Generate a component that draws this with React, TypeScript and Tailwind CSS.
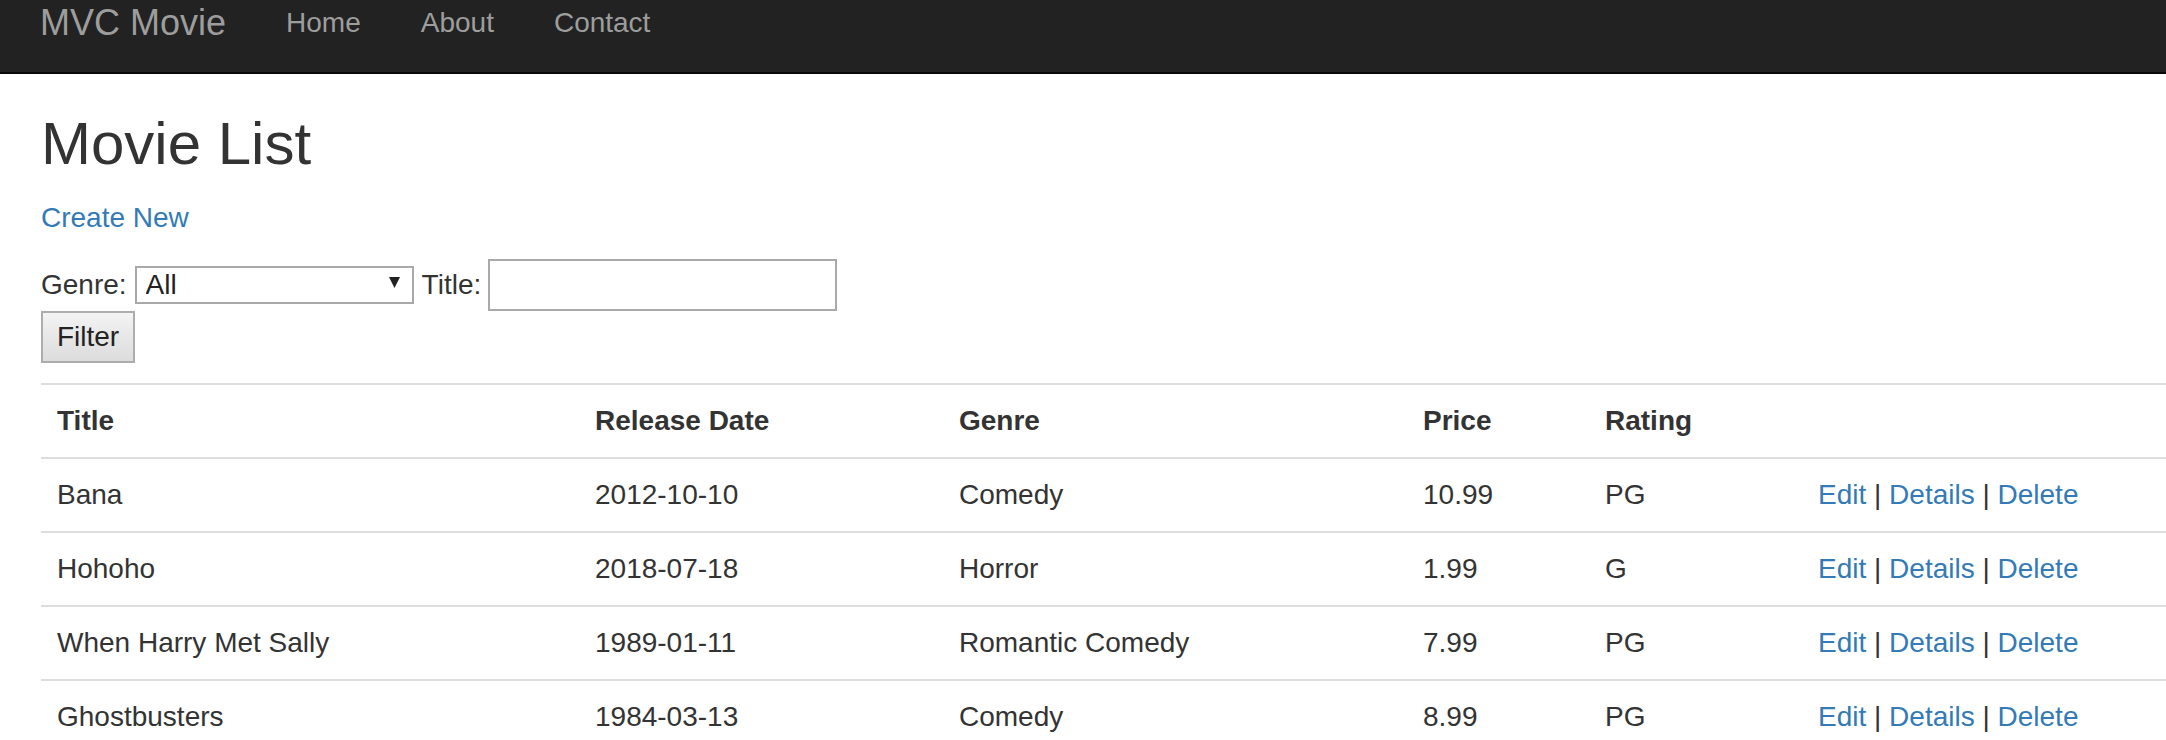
import React from 'react';

const MOVIES = [
    { title: 'Bana', date: '2012-10-10', genre: 'Comedy', price: '10.99', rating: 'PG' },
    { title: 'Hohoho', date: '2018-07-18', genre: 'Horror', price: '1.99', rating: 'G' },
    { title: 'When Harry Met Sally', date: '1989-01-11', genre: 'Romantic Comedy', price: '7.99', rating: 'PG' },
    { title: 'Ghostbusters', date: '1984-03-13', genre: 'Comedy', price: '8.99', rating: 'PG' },
];

const NAV_LINKS = ['Home', 'About', 'Contact'];

const ROW = 'grid grid-cols-[538px_364px_464px_182px_213px_1fr] border-t-2 border-[#ddd]';
const CELL = 'px-4 py-4 leading-[40px] whitespace-nowrap';

const Navbar: React.FC = () => (
    <nav className="h-[74px] bg-[#222] border-b-2 border-[#080808] flex items-start pl-[40px] pt-[3px]">
        <a href="#" className="text-[36px] leading-[40px] text-[#9d9d9d] pr-[30px]">MVC Movie</a>
        <ul className="flex">
            {NAV_LINKS.map((link) => (
                <li key={link}>
                    <a href="#" className="block px-[30px] text-[28px] leading-[40px] text-[#9d9d9d]">{link}</a>
                </li>
            ))}
        </ul>
    </nav>
);

const FilterForm: React.FC = () => (
    <form className="mt-[21px]">
        <div className="flex items-center h-[52px]">
            <span>Genre:</span>
            <div className="relative ml-[8px]">
                <select className="appearance-none w-[279px] h-[38px] border-2 border-[#a9a9a9] bg-white pl-[9px] text-[#222] leading-[34px]">
                    <option>All</option>
                </select>
                <svg className="absolute right-[14px] top-[13px] pointer-events-none" width="11" height="11" viewBox="0 0 11 11">
                    <polygon points="0,0 11,0 5.5,11" fill="#222" />
                </svg>
            </div>
            <span className="ml-[8px]">Title:</span>
            <input type="text" className="ml-[7px] w-[349px] h-[52px] border-2 border-[#a9a9a9] bg-white px-2" />
        </div>
        <button type="button" className="block w-[94px] h-[52px] border-2 border-[#adadad] bg-linear-to-b from-[#f3f3f3] to-[#dcdcdc] text-[#222] text-center">
            Filter
        </button>
    </form>
);

const MovieTable: React.FC = () => (
    <div className="mt-[20px]">
        <div className={`${ROW} font-bold`}>
            <div className={CELL}>Title</div>
            <div className={CELL}>Release Date</div>
            <div className={CELL}>Genre</div>
            <div className={CELL}>Price</div>
            <div className={CELL}>Rating</div>
            <div className={CELL}></div>
        </div>
        {MOVIES.map((movie) => (
            <div key={movie.title} className={ROW}>
                <div className={CELL}>{movie.title}</div>
                <div className={CELL}>{movie.date}</div>
                <div className={CELL}>{movie.genre}</div>
                <div className={CELL}>{movie.price}</div>
                <div className={CELL}>{movie.rating}</div>
                <div className={CELL}>
                    <a href="#" className="text-[#337ab7]">Edit</a> | <a href="#" className="text-[#337ab7]">Details</a> | <a href="#" className="text-[#337ab7]">Delete</a>
                </div>
            </div>
        ))}
    </div>
);

const App: React.FC = () => {
    return (
        <div className="h-[740px] overflow-hidden bg-white font-['Liberation_Sans',Arial,sans-serif] text-[28px] text-[#333]">
            <Navbar />
            <main className="pl-[41px]">
                <h2 className="mt-[37px] text-[60px] leading-[66px] font-normal text-[#333]">Movie List</h2>
                <p className="mt-[21px] leading-[40px]">
                    <a href="#" className="text-[#337ab7]">Create New</a>
                </p>
                <FilterForm />
                <MovieTable />
            </main>
        </div>
    );
};

export default App;
